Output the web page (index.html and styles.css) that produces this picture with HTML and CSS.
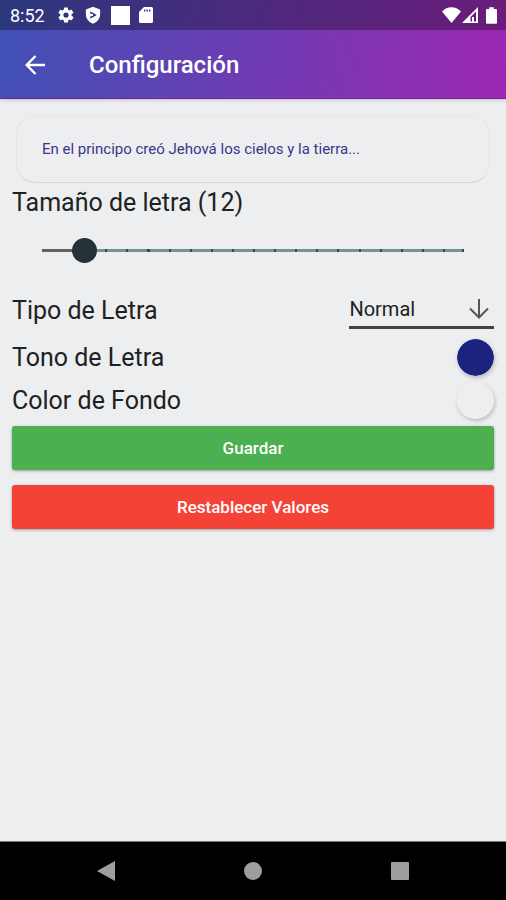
FILE: index.html
```html
<!DOCTYPE html>
<html lang="es">
<head>
<meta charset="utf-8">
<meta name="viewport" content="width=device-width, initial-scale=1">
<title>Configuración</title>
<link rel="stylesheet" href="styles.css">
</head>
<body>
<header class="top">
  <div class="status">
    <div class="status-left">
      <span class="clock">8:52</span>
      <svg width="18" height="18" viewBox="0 0 24 24" fill="currentColor" aria-hidden="true"><path fill-rule="evenodd" d="M19.4 13a7.500 7.500 0 0 0 0-2l2.200-1.700a.5.5 0 0 0 .1-.6l-2.100-3.600a.5.5 0 0 0-.6-.2l-2.500 1a7.600 7.600 0 0 0-1.700-1l-.4-2.600a.5.5 0 0 0-.5-.4H9.900a.5.5 0 0 0-.5.4L9 4.900a7.600 7.600 0 0 0-1.700 1l-2.500-1a.5.500 0 0 0-.6.2L2.100 8.700a.5.500 0 0 0 .1.600L4.400 11a7.500 7.500 0 0 0 0 2l-2.200 1.700a.5.500 0 0 0-.1.600l2.100 3.600c.1.200.4.300.6.200l2.500-1a7.600 7.600 0 0 0 1.700 1l.4 2.600c0 .2.300.4.500.4h4.200c.2 0 .5-.2.500-.4l.4-2.600a7.600 7.600 0 0 0 1.700-1l2.500 1c.2.100.5 0 .6-.2l2.100-3.600a.5.500 0 0 0-.1-.6zM12 15.500a3.500 3.500 0 1 1 0-7 3.500 3.500 0 0 1 0 7z"/></svg>
      <svg width="18" height="18" viewBox="0 0 24 24" fill="currentColor" aria-hidden="true"><path fill-rule="evenodd" d="M12 1 2.500 4.500V11c0 6 4 10.500 9.500 12.500C17.500 21.500 21.500 17 21.500 11V4.500zM8.500 7v10L17 12z"/><path d="M6 10.500h6v3H6z"/></svg>
      <svg width="19" height="19" viewBox="0 0 19 19" fill="currentColor" aria-hidden="true"><path d="M0 0h19v19H0z"/></svg>
      <svg width="14" height="16" viewBox="0 0 14 16" fill="currentColor" aria-hidden="true"><path fill-rule="evenodd" d="M5 0h7.500A1.500 1.500 0 0 1 14 1.500v13a1.500 1.500 0 0 1-1.500 1.500h-11A1.500 1.500 0 0 1 0 14.500V5zM5 2.500v2h1.400v-2zm2.500 0v2h1.400v-2zm2.500 0v2h1.400v-2z"/></svg>
    </div>
    <div class="status-right">
      <svg width="19" height="16" viewBox="0 0 19 16" fill="currentColor" aria-hidden="true"><path d="M0 4.500C5-1.200 14-1.200 19 4.500L9.500 16z"/></svg>
      <svg width="16" height="16" viewBox="0 0 16 16" aria-hidden="true"><path fill="currentColor" fill-rule="evenodd" d="M16 0v16H0zM14 4.500 8.500 10v4.500H10V10h2v4.500h2z"/></svg>
      <svg class="battery" width="11" height="17" viewBox="0 0 12 18" fill="currentColor" aria-hidden="true"><path d="M3.500 0h5v2H11a1 1 0 0 1 1 1v14a1 1 0 0 1-1 1H1a1 1 0 0 1-1-1V3a1 1 0 0 1 1-1h2.500z"/></svg>
    </div>
  </div>
  <div class="appbar">
    <button class="icon-button" type="button" aria-label="Volver">
      <svg width="20" height="20" viewBox="0 0 20 20" fill="none" stroke="currentColor" stroke-width="2.400" aria-hidden="true"><path d="M20 10H2M10.500 1 1.700 10l8.800 9"/></svg>
    </button>
    <h1>Configuración</h1>
  </div>
</header>
<main class="content">
  <p class="preview">En el principo creó Jehová los cielos y la tierra...</p>
  <label class="label" for="size">Tamaño de letra (12)</label>
  <div class="slider"><input id="size" type="range" min="10" max="30" step="1" value="12"></div>
  <div class="row row-select">
    <label class="label" for="font">Tipo de Letra</label>
    <div class="select">
      <select id="font"><option>Normal</option></select>
      <svg width="20" height="20" viewBox="0 0 20 20" fill="none" stroke="currentColor" stroke-width="2" aria-hidden="true"><path d="M10 0v18M1 9.500l9 9 9-9"/></svg>
    </div>
  </div>
  <div class="row">
    <label class="label" for="tone">Tono de Letra</label>
    <input class="swatch" id="tone" type="color" value="#1a237e">
  </div>
  <div class="row">
    <label class="label" for="background">Color de Fondo</label>
    <input class="swatch" id="background" type="color" value="#eeeeee">
  </div>
  <div class="actions">
    <button class="action save" type="button">Guardar</button>
    <button class="action reset" type="button">Restablecer Valores</button>
  </div>
</main>
<nav class="system">
  <button type="button" aria-label="Atrás"><svg width="20" height="22" viewBox="0 0 20 22" fill="currentColor"><path d="M19 1v20L1 11z"/></svg></button>
  <button type="button" aria-label="Inicio"><svg width="20" height="20" viewBox="0 0 20 20" fill="currentColor"><circle cx="10" cy="10" r="9"/></svg></button>
  <button type="button" aria-label="Recientes"><svg width="20" height="20" viewBox="0 0 20 20" fill="currentColor"><rect x="1" y="1" width="18" height="18" rx="1"/></svg></button>
</nav>
</body>
</html>
```

FILE: styles.css
```css
* { box-sizing: border-box; }
body {
  margin: 0;
  min-height: 100vh;
  display: flex;
  flex-direction: column;
  background: #eceef0;
  color: #212121;
  font-family: Roboto, sans-serif;
}
button { border: 0; padding: 0; background: none; color: inherit; font: inherit; }
svg { display: block; flex: none; }
.top {
  color: #fff;
  background: linear-gradient(100deg, #3f51b5, #9c27b0);
  border-bottom: 1px solid #7b1fa2;
  box-shadow: 0 1px 4px rgba(0, 0, 0, 0.2);
}
.status {
  height: 30px;
  padding: 0 9px 0 10px;
  display: flex;
  justify-content: space-between;
  align-items: center;
  background: rgba(0, 0, 0, 0.3);
}
.status-left { display: flex; align-items: center; gap: 9px; }
.clock { font-size: 18px; margin-right: 3px; }
.status-right { display: flex; align-items: center; gap: 1px; }
.battery { margin-left: 7px; }
.appbar {
  height: 68px;
  padding: 2px 24px 0;
  display: flex;
  align-items: center;
  gap: 43px;
}
.icon-button { padding: 1px; }
h1 { margin: 0; font-size: 24px; line-height: 32px; font-weight: 500; }
.content { flex: 1; padding: 16px 12px; }
.preview {
  margin: 0 4px 4px;
  padding: 24px 25px;
  border: 1px solid #e2e3e5;
  border-radius: 20px;
  border-top-color: #e7e8ea;
  border-bottom-color: #d6d7d9;
  color: #3b368a;
  font-size: 15px;
  line-height: 18px;
}
.label { display: block; font-size: 25px; line-height: 32px; }
.slider { padding: 18px 18px; }
.slider input {
  -webkit-appearance: none;
  appearance: none;
  display: block;
  width: 100%;
  height: 26px;
  margin: 0;
  background:
    linear-gradient(#37474f, #37474f) right 12px center / 2px 3px no-repeat,
    linear-gradient(to right, #616161 10%, transparent 10%) center / calc(100% - 24px) 3px no-repeat,
    repeating-linear-gradient(to right, #37474f 0 2px, transparent 2px 5%) center / calc(100% - 24px) 3px no-repeat,
    linear-gradient(#78909c, #78909c) center / calc(100% - 24px) 3px no-repeat;
}
.slider input::-webkit-slider-thumb {
  -webkit-appearance: none;
  width: 25px;
  height: 25px;
  border-radius: 50%;
  background: #263238;
}
.row { min-height: 43px; display: flex; justify-content: space-between; align-items: center; }
.row-select { min-height: 55px; align-items: flex-start; padding-top: 14px; }
.select {
  position: relative;
  width: 30%;
  height: 34px;
  border-bottom: 3px solid #424242;
  color: #555;
}
.select select {
  appearance: none;
  width: 100%;
  height: 28px;
  padding: 0;
  border: 0;
  background: none;
  color: #212121;
  font: 20px/28px Roboto, sans-serif;
}
.select svg { position: absolute; right: 5px; top: 4px; pointer-events: none; }
.swatch {
  appearance: none;
  width: 37px;
  height: 37px;
  padding: 0;
  border: 0;
  border-radius: 50%;
  background: none;
  box-shadow: 1px 2px 4px rgba(0, 0, 0, 0.22);
}
.swatch::-webkit-color-swatch-wrapper { padding: 0; }
.swatch::-webkit-color-swatch { border: 0; border-radius: 50%; }
.actions { display: flex; flex-direction: column; gap: 15px; padding-top: 4px; }
.action {
  height: 44px;
  border-radius: 3px;
  box-shadow: 0 1px 3px rgba(0, 0, 0, 0.35);
  color: #fff;
  font-size: 17px;
  font-weight: 500;
}
.save { background: #4caf50; }
.reset { background: #f44336; }
.system {
  height: 59px;
  padding: 0 33px;
  display: flex;
  justify-content: space-around;
  align-items: center;
  background: #000;
  color: #9e9e9e;
  border-top: 1px solid #777;
}
```
